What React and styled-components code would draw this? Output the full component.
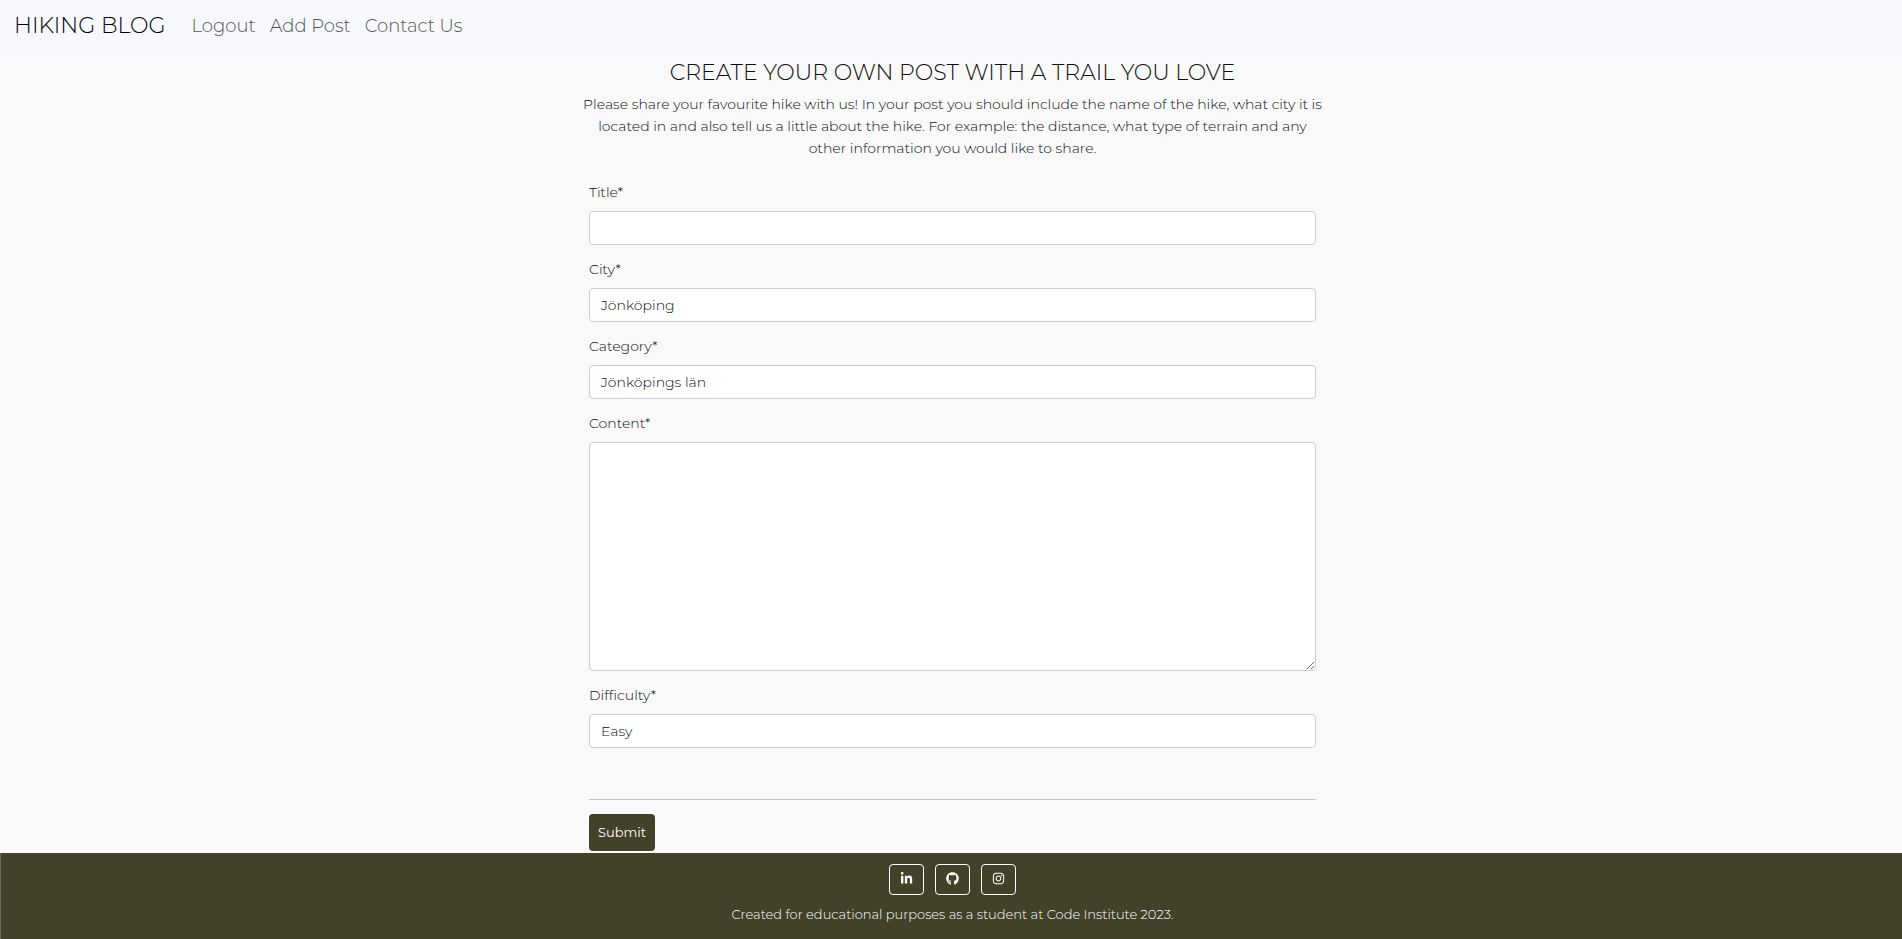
import React from "react";
import styled, { createGlobalStyle } from "styled-components";
import { FaGithub, FaInstagram, FaLinkedinIn } from "react-icons/fa";

const GlobalStyle = createGlobalStyle`
  *, *::before, *::after { box-sizing: border-box; }
  body {
    margin: 0;
    background: #f9f9f9;
    color: #0c0e10;
    font-family: Montserrat, Inter, "Liberation Sans", sans-serif;
    font-size: 14px;
    font-weight: 300;
    line-height: 22px;
  }
  input, select, textarea, button { font: inherit; color: inherit; }
`;

const Page = styled.div`
  display: flex;
  flex-direction: column;
  min-height: 100vh;
`;

const Navbar = styled.nav`
  display: flex;
  align-items: center;
  padding: 9px 14px 11px;
  background: #f7f8fb;
`;

const Brand = styled.a`
  margin-right: 19px;
  color: #000;
  font-size: 22px;
  line-height: 34px;
  text-decoration: none;
`;

const NavList = styled.ul`
  display: flex;
  margin: 0;
  padding: 0;
  list-style: none;
`;

const NavLink = styled.a`
  display: block;
  padding: 0 7px;
  color: #555;
  font-size: 18px;
  line-height: 34px;
  text-decoration: none;
`;

const Main = styled.main`
  display: flex;
  flex-direction: column;
  align-items: center;
  padding: 5px 0 2px 3px;
`;

const Heading = styled.h1`
  margin: 0 0 6px;
  font-size: 22px;
  font-weight: 300;
  line-height: 28px;
  text-align: center;
`;

const Intro = styled.p`
  max-width: 744px;
  margin: 0 0 22px;
  text-align: center;
`;

const PostForm = styled.form`
  width: 100%;
  max-width: 727px;
`;

const Field = styled.div`
  display: flex;
  flex-direction: column;
  gap: 8px;
  margin-bottom: 13px;
`;

const Control = styled.input`
  display: block;
  width: 100%;
  height: ${(p) => (p.as === "textarea" ? "229px" : "34px")};
  margin: 0;
  padding: 5px 11px;
  border: 1px solid #c8ced5;
  border-radius: 4px;
  background: #fff;
  appearance: none;
  resize: vertical;
`;

const Divider = styled.hr`
  margin: 51px 0 14px;
  border: 0;
  border-top: 1px solid #c3c4c5;
`;

const SubmitButton = styled.button`
  display: block;
  padding: 7px 9px 8px;
  border: 0;
  border-radius: 4px;
  background: #42412a;
  color: #fff;
  font-size: 13px;
  font-weight: 400;
`;

const Footer = styled.footer`
  display: flex;
  flex: 1;
  flex-direction: column;
  align-items: center;
  gap: 8px;
  padding: 11px 0 22px 2px;
  border-left: 1px solid #66665a;
  background: #42412a;
  color: #fff;
  font-size: 13px;
`;

const Socials = styled.div`
  display: flex;
  gap: 11px;
`;

const SocialLink = styled.a`
  display: flex;
  align-items: center;
  justify-content: center;
  width: 35px;
  height: 31px;
  padding-bottom: 3px;
  border: 1px solid #fff;
  border-radius: 4px;
  color: #fff;
  font-size: 13px;
`;

const Credit = styled.p`
  margin: 0;
`;

function FormField({ id, label, children, ...rest }) {
  return (
    <Field>
      <label htmlFor={id}>{label}*</label>
      <Control id={id} name={id} {...rest}>{children}</Control>
    </Field>
  );
}

export default function App() {
  return (
    <Page>
      <GlobalStyle />
      <Navbar>
        <Brand href="#">HIKING BLOG</Brand>
        <NavList>
          <li><NavLink href="#logout">Logout</NavLink></li>
          <li><NavLink href="#add">Add Post</NavLink></li>
          <li><NavLink href="#contact">Contact Us</NavLink></li>
        </NavList>
      </Navbar>
      <Main>
        <Heading>CREATE YOUR OWN POST WITH A TRAIL YOU LOVE</Heading>
        <Intro>
          Please share your favourite hike with us! In your post you should include the name of the
          hike, what city it is located in and also tell us a little about the hike. For example:
          the distance, what type of terrain and any other information you would like to share.
        </Intro>
        <PostForm>
          <FormField id="title" label="Title" type="text" />
          <FormField id="city" label="City" as="select">
            <option>Jönköping</option>
          </FormField>
          <FormField id="category" label="Category" as="select">
            <option>Jönköpings län</option>
          </FormField>
          <FormField id="content" label="Content" as="textarea" />
          <FormField id="difficulty" label="Difficulty" as="select">
            <option>Easy</option>
          </FormField>
          <Divider />
          <SubmitButton type="submit">Submit</SubmitButton>
        </PostForm>
      </Main>
      <Footer>
        <Socials>
          <SocialLink href="#linkedin" aria-label="LinkedIn"><FaLinkedinIn /></SocialLink>
          <SocialLink href="#github" aria-label="GitHub"><FaGithub /></SocialLink>
          <SocialLink href="#instagram" aria-label="Instagram"><FaInstagram /></SocialLink>
        </Socials>
        <Credit>Created for educational purposes as a student at Code Institute 2023.</Credit>
      </Footer>
    </Page>
  );
}
